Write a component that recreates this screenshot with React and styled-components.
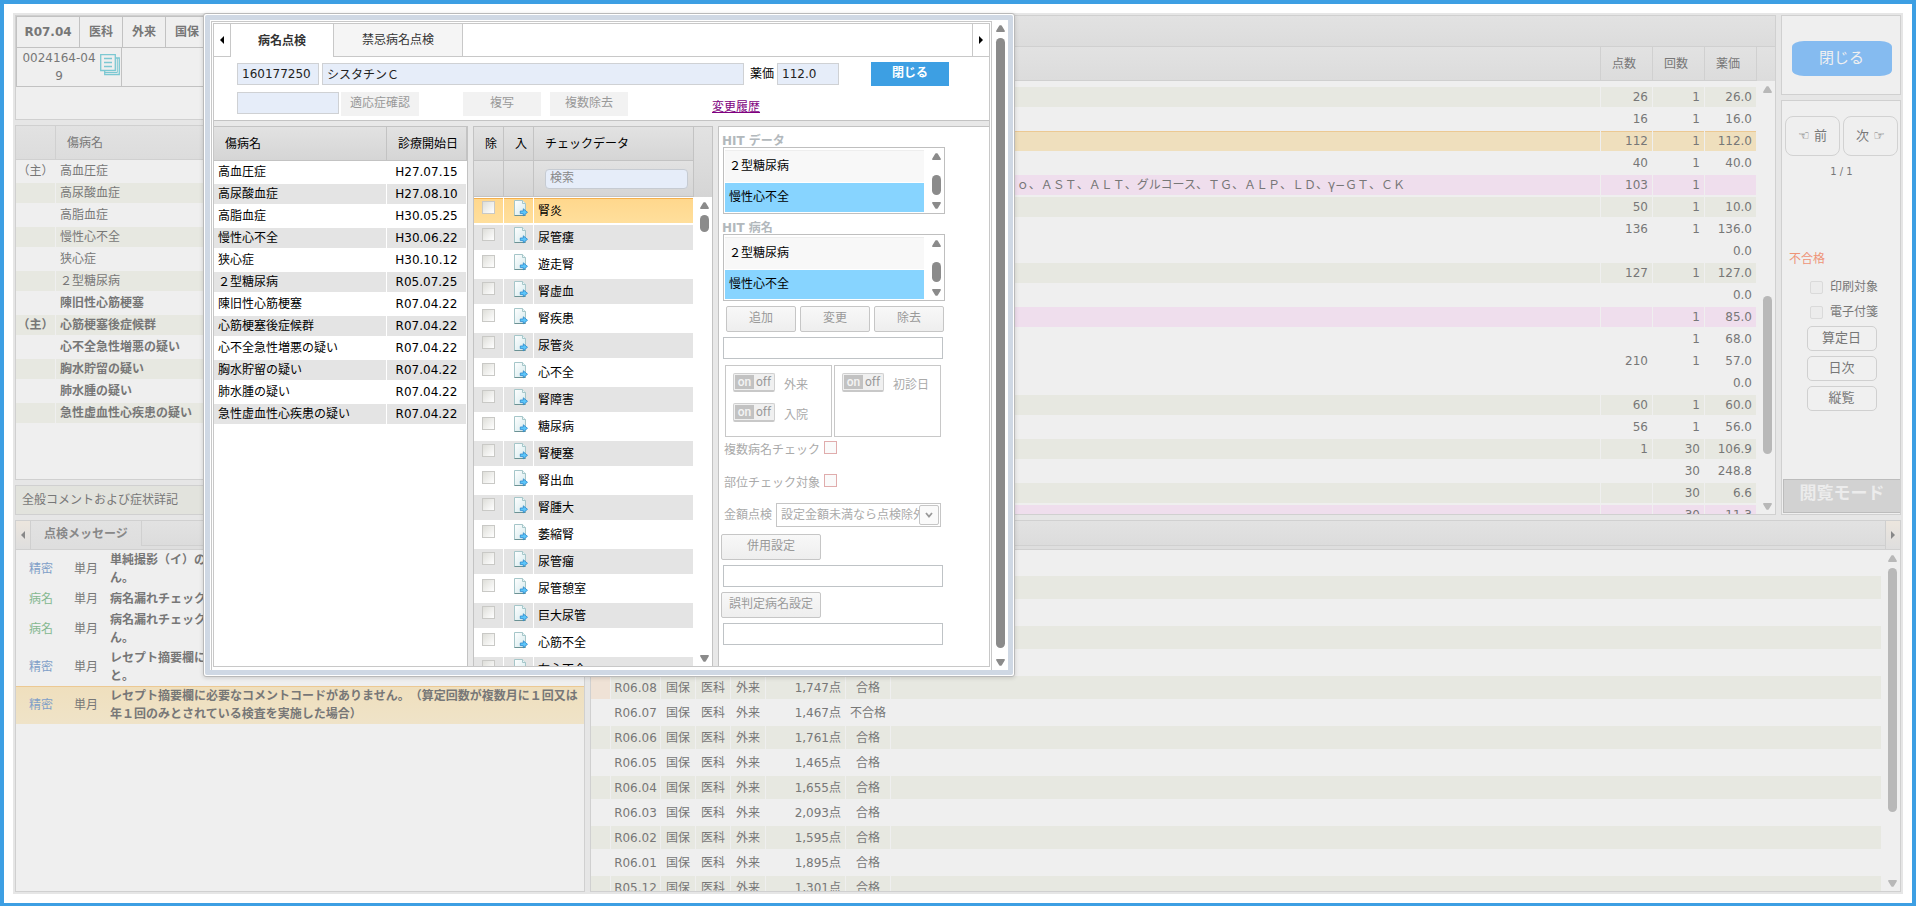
import React from 'react';
import styled, { createGlobalStyle, css } from 'styled-components';

const diseases = [
	{ name: '高血圧症', date: 'H27.07.15', main: true },
	{ name: '高尿酸血症', date: 'H27.08.10' },
	{ name: '高脂血症', date: 'H30.05.25' },
	{ name: '慢性心不全', date: 'H30.06.22' },
	{ name: '狭心症', date: 'H30.10.12' },
	{ name: '２型糖尿病', date: 'R05.07.25' },
	{ name: '陳旧性心筋梗塞', date: 'R07.04.22', bold: true },
	{ name: '心筋梗塞後症候群', date: 'R07.04.22', bold: true, main: true },
	{ name: '心不全急性増悪の疑い', date: 'R07.04.22', bold: true },
	{ name: '胸水貯留の疑い', date: 'R07.04.22', bold: true },
	{ name: '肺水腫の疑い', date: 'R07.04.22', bold: true },
	{ name: '急性虚血性心疾患の疑い', date: 'R07.04.22', bold: true },
];

const checkData = [
	'腎炎', '尿管瘻', '遊走腎', '腎虚血', '腎疾患', '尿管炎', '心不全', '腎障害', '糖尿病',
	'腎梗塞', '腎出血', '腎腫大', '萎縮腎', '尿管瘤', '尿管憩室', '巨大尿管', '心筋不全', '右心不全',
];

// name, points, count, price, tone
const acts = [
	['', '26', '1', '26.0', 'stripe'],
	['', '16', '1', '16.0', 'plain'],
	['', '112', '1', '112.0', 'selected'],
	['', '40', '1', '40.0', 'plain'],
	['ｏ、ＡＳＴ、ＡＬＴ、グルコース、ＴＧ、ＡＬＰ、ＬＤ、γ−ＧＴ、ＣＫ', '103', '1', '', 'pink'],
	['', '50', '1', '10.0', 'stripe'],
	['', '136', '1', '136.0', 'plain'],
	['', '', '', '0.0', 'plain'],
	['', '127', '1', '127.0', 'stripe'],
	['', '', '', '0.0', 'plain'],
	['', '', '1', '85.0', 'pink'],
	['', '', '1', '68.0', 'plain'],
	['', '210', '1', '57.0', 'plain'],
	['', '', '', '0.0', 'plain'],
	['', '60', '1', '60.0', 'stripe'],
	['', '56', '1', '56.0', 'plain'],
	['', '1', '30', '106.9', 'stripe'],
	['', '', '30', '248.8', 'plain'],
	['', '', '30', '6.6', 'stripe'],
	['', '', '30', '11.3', 'pink'],
];

const history = [
	null, null, null, null, null,
	['R06.08', '1,747点', '合格'],
	['R06.07', '1,467点', '不合格'],
	['R06.06', '1,761点', '合格'],
	['R06.05', '1,465点', '合格'],
	['R06.04', '1,655点', '合格'],
	['R06.03', '2,093点', '合格'],
	['R06.02', '1,595点', '合格'],
	['R06.01', '1,895点', '合格'],
	['R05.12', '1,301点', '合格'],
];

const messages = [
	{ kind: '精密', lines: ['単純撮影（イ）の', 'ん。'] },
	{ kind: '病名', lines: ['病名漏れチェック'] },
	{ kind: '病名', lines: ['病名漏れチェック', 'ん。'] },
	{ kind: '精密', lines: ['レセプト摘要欄に', 'と。'] },
	{
		kind: '精密',
		selected: true,
		lines: [
			'レセプト摘要欄に必要なコメントコードがありません。（算定回数が複数月に１回又は',
			'年１回のみとされている検査を実施した場合）',
		],
	},
];

function Scrollbar({ before, thumb, after, dim }) {
	const color = dim ? '#b8b8b8' : '#8b8b8b';
	return (
		<ScrollTrack aria-hidden="true">
			<svg width="9" height="7" viewBox="0 0 9 7">
				<path d="M3.8 1 H5.2 L8.2 6.2 H.8 Z" fill={color} stroke={color} strokeWidth="1.4" strokeLinejoin="round" />
			</svg>
			<ScrollLane>
				<Space $grow={before} />
				<Thumb $grow={thumb} $color={color} />
				<Space $grow={after} />
			</ScrollLane>
			<svg width="9" height="7" viewBox="0 0 9 7">
				<path d="M3.8 6 H5.2 L8.2 .8 H.8 Z" fill={color} stroke={color} strokeWidth="1.4" strokeLinejoin="round" />
			</svg>
		</ScrollTrack>
	);
}

function Arrow({ right, color = '#000' }) {
	return (
		<svg width="4" height="8" viewBox="0 0 4 8" aria-hidden="true">
			<path d={right ? 'M0 0 L4 4 L0 8 Z' : 'M4 0 L0 4 L4 8 Z'} fill={color} />
		</svg>
	);
}

function CopyIcon() {
	return (
		<svg width="20" height="22" viewBox="0 0 20 22" fill="none" stroke="#7cc8d2" strokeWidth="1.3" aria-hidden="true">
			<path d="M.7 .7 H15.3 V16.5 H.7 Z" />
			<path d="M15.3 4 H19.3 V20.5 H4.7 V16.5" />
			<path d="M17.3 4 V18.5 H4.7" strokeWidth="1" />
			<path d="M4 4.5 H12 M4 8.5 H12 M4 12.5 H12" />
		</svg>
	);
}

function InsertIcon() {
	return (
		<svg width="14" height="17" viewBox="0 0 14 17" aria-hidden="true">
			<defs>
				<linearGradient id="sheet" x1="0" y1="0" x2="1" y2="1">
					<stop offset="0" stopColor="#fff" />
					<stop offset="1" stopColor="#d4e9ec" />
				</linearGradient>
			</defs>
			<path d="M.5 .5 H8.5 L11.5 3.5 V15.5 H.5 Z" fill="url(#sheet)" stroke="#a5c6c9" />
			<path d="M.5 15.5 H11.5" stroke="#6c9294" />
			<path d="M8.5 .5 V3.5 H11.5" fill="#e9f6f7" stroke="#a5c6c9" />
			<path d="M6.3 11 H9.3 V8.8 L13.5 12.3 L9.3 15.8 V13.6 H6.3 Z" fill="#5cc6fa" stroke="#2a86cc" strokeWidth=".8" />
		</svg>
	);
}

function ReceiptSummary() {
	return (
		<Panel>
			<TagRow>
				<Tag $width={63}>R07.04</Tag>
				<Tag $width={43}>医科</Tag>
				<Tag $width={43}>外来</Tag>
				<Tag $width={43}>国保</Tag>
			</TagRow>
			<PatientRow>
				<PatientCell>
					<span>0024164-04 9</span>
					<CopyIcon />
				</PatientCell>
			</PatientRow>
		</Panel>
	);
}

function DiseaseList() {
	return (
		<Panel>
			<DimTable $rowHeight={22}>
				<colgroup>
					<col width="40" />
					<col />
				</colgroup>
				<thead>
					<tr>
						<Th $dim />
						<Th $dim $pad={11}>傷病名</Th>
					</tr>
				</thead>
				<tbody>
					{diseases.map((d, i) => (
						<Row key={d.name} $tone={i % 2 ? 'stripe' : 'plain'} $bold={d.bold}>
							<Td $align="center" $pad={0}>{d.main ? '（主）' : ''}</Td>
							<Td>{d.name}</Td>
						</Row>
					))}
				</tbody>
			</DimTable>
		</Panel>
	);
}

function ActList() {
	return (
		<Panel>
			<TitleBar />
			<TableArea>
				<Clip>
					<DimTable $rowHeight={22}>
						<colgroup>
							<col width="426" />
							<col />
							<col width="52" />
							<col width="52" />
							<col width="52" />
						</colgroup>
						<thead>
							<tr>
								<Th $dim colSpan={2} />
								<Th $dim $pad={11}>点数</Th>
								<Th $dim $pad={11}>回数</Th>
								<Th $dim $pad={11}>薬価</Th>
							</tr>
							<SpacerRow><td colSpan={5} /></SpacerRow>
						</thead>
						<tbody>
							{acts.map(([name, points, count, price, tone], i) => (
								<Row key={i} $tone={tone}>
									<Td $open />
									<Td>{name}</Td>
									<Td $align="right">{points}</Td>
									<Td $align="right">{count}</Td>
									<Td $align="right">{price}</Td>
								</Row>
							))}
						</tbody>
					</DimTable>
				</Clip>
				<ScrollSide $width={18}>
					<HeadStub $height={34} $dim />
					<Scrollbar before={202} thumb={163} after={44} dim />
				</ScrollSide>
			</TableArea>
		</Panel>
	);
}

function SideMenu() {
	return (
		<SideColumn>
			<CloseBox>
				<CloseButton type="button">閉じる</CloseButton>
			</CloseBox>
			<SidePanel>
				<PagerRow>
					<PagerButton type="button">☜ 前</PagerButton>
					<PagerButton type="button">次 ☞</PagerButton>
				</PagerRow>
				<PageCount>1 / 1</PageCount>
				<Verdict>不合格</Verdict>
				<SideCheck>
					<input type="checkbox" disabled />印刷対象
				</SideCheck>
				<SideCheck>
					<input type="checkbox" disabled />電子付箋
				</SideCheck>
				<SideButtons>
					<SideButton type="button">算定日</SideButton>
					<SideButton type="button">日次</SideButton>
					<SideButton type="button">縦覧</SideButton>
				</SideButtons>
				<ModeBadge>閲覧モード</ModeBadge>
			</SidePanel>
		</SideColumn>
	);
}

function MessageList() {
	return (
		<Panel>
			<DimTabs>
				<DimArrow type="button" aria-label="前のタブ"><Arrow color="#888" /></DimArrow>
				<DimTab type="button">点検メッセージ</DimTab>
				<TabRest />
			</DimTabs>
			{messages.map((m, i) => (
				<Message key={i} $selected={m.selected}>
					<Kind $kind={m.kind}>{m.kind}</Kind>
					<span>単月</span>
					<p>
						{m.lines.map((line) => (
							<React.Fragment key={line}>{line}<br /></React.Fragment>
						))}
					</p>
				</Message>
			))}
		</Panel>
	);
}

function HistoryList() {
	return (
		<Panel>
			<DimTabs>
				<TabRest />
				<DimArrow type="button" aria-label="次のタブ" $right><Arrow right color="#888" /></DimArrow>
			</DimTabs>
			<TableArea>
				<Clip>
					<DimTable $rowHeight={25}>
						<colgroup>
							<col width="20" />
							<col width="50" />
							<col width="35" />
							<col width="35" />
							<col width="35" />
							<col width="80" />
							<col width="45" />
							<col />
						</colgroup>
						<tbody>
							{history.map((h, i) => (
								<Row key={i} $tone={i % 2 ? 'stripe' : 'plain'}>
									<Td $peach={i === 5} />
									<Td $align="center" $pad={0}>{h && h[0]}</Td>
									<Td $align="center" $pad={0}>{h && '国保'}</Td>
									<Td $align="center" $pad={0}>{h && '医科'}</Td>
									<Td $align="center" $pad={0}>{h && '外来'}</Td>
									<Td $align="right">{h && h[1]}</Td>
									<Td $align="center" $pad={0}>{h && h[2]}</Td>
									<Td $open />
								</Row>
							))}
						</tbody>
					</DimTable>
				</Clip>
				<ScrollSide $width={19}>
					<Scrollbar before={0} thumb={245} after={62} dim />
				</ScrollSide>
			</TableArea>
		</Panel>
	);
}

function HitList({ title }) {
	return (
		<>
			<HitTitle>{title}</HitTitle>
			<HitBox>
				<ul>
					<HitItem>２型糖尿病</HitItem>
					<HitItem $selected>慢性心不全</HitItem>
				</ul>
				<ScrollSide $width={16}>
					<Scrollbar before={9} thumb={20} after={1} />
				</ScrollSide>
			</HitBox>
		</>
	);
}

function Switch({ label }) {
	return (
		<SwitchRow>
			<SwitchButton type="button" disabled aria-label={label}>
				<b>on</b>
				<span>off</span>
			</SwitchButton>
			{label}
		</SwitchRow>
	);
}

function HitForm() {
	return (
		<FormPanel>
			<HitList title="HIT データ" />
			<HitList title="HIT 病名" />
			<ButtonRow>
				<GrayButton type="button" disabled>追加</GrayButton>
				<GrayButton type="button" disabled>変更</GrayButton>
				<GrayButton type="button" disabled>除去</GrayButton>
			</ButtonRow>
			<LineInput aria-label="病名" />
			<SwitchGroups>
				<SwitchGroup>
					<Switch label="外来" />
					<Switch label="入院" />
				</SwitchGroup>
				<SwitchGroup>
					<Switch label="初診日" />
				</SwitchGroup>
			</SwitchGroups>
			<RedCheck>複数病名チェック<input type="checkbox" disabled /></RedCheck>
			<RedCheck>部位チェック対象<input type="checkbox" disabled /></RedCheck>
			<SelectRow>
				<label htmlFor="amount">金額点検</label>
				<SelectBox>
					<select id="amount" disabled>
						<option>設定金額未満なら点検除外</option>
					</select>
					<Chevron>
						<svg width="8" height="6" viewBox="0 0 8 6" aria-hidden="true">
							<path d="M1 1 L4 4.5 L7 1" fill="none" stroke="#999" strokeWidth="1.8" />
						</svg>
					</Chevron>
				</SelectBox>
			</SelectRow>
			<WideButton type="button" disabled>併用設定</WideButton>
			<LineInput aria-label="併用設定" />
			<WideButton type="button" disabled>誤判定病名設定</WideButton>
			<LineInput aria-label="誤判定病名設定" />
		</FormPanel>
	);
}

function CheckDialog() {
	return (
		<Dialog role="dialog" aria-label="病名点検">
			<DialogFrame>
				<DialogOuter>
					<DialogInner>
						<Tabs>
							<TabArrow type="button" aria-label="前のタブ"><Arrow /></TabArrow>
							<Tab type="button" $active>病名点検</Tab>
							<Tab type="button">禁忌病名点検</Tab>
							<TabFill />
							<TabArrow type="button" aria-label="次のタブ" $right><Arrow right /></TabArrow>
						</Tabs>
						<Tools>
							<ToolRow>
								<Field $width={82} defaultValue="160177250" aria-label="コード" />
								<Field $grow defaultValue="シスタチンＣ" aria-label="名称" />
								<PriceLabel>薬価<Field $width={62} defaultValue="112.0" /></PriceLabel>
								<BlueButton type="button">閉じる</BlueButton>
							</ToolRow>
							<SubRow>
								<Field $width={102} aria-label="適応症" />
								<FlatButton type="button" disabled>適応症確認</FlatButton>
								<FlatButton type="button" disabled $gap={42}>複写</FlatButton>
								<FlatButton type="button" disabled $gap={7}>複数除去</FlatButton>
								<HistoryLink href="#history">変更履歴</HistoryLink>
							</SubRow>
						</Tools>
						<Columns>
							<NamePanel>
								<DialogTable $rowHeight={22}>
									<colgroup>
										<col />
										<col width="80" />
									</colgroup>
									<thead>
										<tr>
											<Th $pad={11}>傷病名</Th>
											<Th $pad={11}>診療開始日</Th>
										</tr>
									</thead>
									<tbody>
										{diseases.map((d, i) => (
											<Row key={d.name} $tone={i % 2 ? 'gray' : 'white'}>
												<Td>{d.name}</Td>
												<Td $align="center" $pad={0}>{d.date}</Td>
											</Row>
										))}
									</tbody>
								</DialogTable>
							</NamePanel>
							<CheckPanel>
								<Clip>
									<DialogTable $rowHeight={27}>
										<colgroup>
											<col width="30" />
											<col width="30" />
											<col />
										</colgroup>
										<thead>
											<tr>
												<Th $pad={11}>除</Th>
												<Th $pad={11}>入</Th>
												<Th $pad={11}>チェックデータ</Th>
											</tr>
											<tr>
												<Th $tall />
												<Th $tall />
												<Th $tall $pad={11}><Search placeholder="検索" aria-label="検索" /></Th>
											</tr>
										</thead>
										<tbody>
											{checkData.map((name, i) => (
												<Row key={name} $tone={i === 0 ? 'picked' : i % 2 ? 'gray' : 'white'}>
													<Td $top $pad={8}><input type="checkbox" disabled aria-label={name} /></Td>
													<Td $top $pad={10}><InsertIcon /></Td>
													<Td>{name}</Td>
												</Row>
											))}
										</tbody>
									</DialogTable>
								</Clip>
								<ScrollSide $width={18}>
									<HeadStub $height={70} />
									<Scrollbar before={0} thumb={17} after={418} />
								</ScrollSide>
							</CheckPanel>
							<HitForm />
						</Columns>
					</DialogInner>
				</DialogOuter>
				<ScrollSide $width={16}>
					<Scrollbar before={0} thumb={608} after={5} />
				</ScrollSide>
			</DialogFrame>
		</Dialog>
	);
}

function App() {
	return (
		<>
			<GlobalStyle />
			<Page>
				<Workspace>
					<TopArea>
						<LeftColumn>
							<ReceiptSummary />
							<DiseaseList />
							<CommentBar>全般コメントおよび症状詳記</CommentBar>
						</LeftColumn>
						<ActList />
						<SideMenu />
					</TopArea>
					<BottomArea>
						<MessageList />
						<HistoryList />
					</BottomArea>
				</Workspace>
				<CheckDialog />
			</Page>
		</>
	);
}

export default App;

const GlobalStyle = createGlobalStyle`
	* {
		box-sizing: border-box;
	}
	body {
		margin: 0;
		color: #000;
		font: 12px/18px "DejaVu Sans", "Noto Sans CJK JP", sans-serif;
		text-spacing-trim: space-all;
	}
	button, input, select {
		margin: 0;
		padding: 0;
		color: inherit;
		font: inherit;
	}
	ul, p {
		margin: 0;
		padding: 0;
		list-style: none;
	}
	svg {
		display: block;
		flex: none;
	}
`;

const dimHead = 'linear-gradient(#e2e2e2, #dcdcdc)';
const darkHead = 'linear-gradient(#e2e2e2, #d5d5d5)';

const Page = styled.div`
	position: relative;
	height: 100vh;
	padding: 9px;
	border: 4px solid #3d9fe3;
	border-bottom-width: 3px;
	background: #fff;
`;
const Workspace = styled.div`
	display: grid;
	grid-template-rows: minmax(0, 500fr) minmax(0, 372fr);
	gap: 5px;
	height: 100%;
	padding: 2px;
	background: #e6e6e6;
	color: #777;
`;
const TopArea = styled.div`
	display: grid;
	grid-template-columns: 30% minmax(0, 1fr) 120px;
	gap: 5px;
	min-height: 0;
`;
const BottomArea = styled.div`
	display: grid;
	grid-template-columns: minmax(0, 10fr) minmax(0, 23fr);
	gap: 5px;
	min-height: 0;
`;
const LeftColumn = styled.div`
	display: grid;
	grid-template-rows: 105px minmax(0, 1fr) 30px;
	gap: 5px;
	min-height: 0;
`;
const Panel = styled.section`
	display: flex;
	flex-direction: column;
	min-width: 0;
	min-height: 0;
	overflow: hidden;
	border: 1px solid #d0d0d0;
	background: #efefef;
`;
const TagRow = styled.div`
	display: flex;
	height: 32px;
	border: solid #c2c2c2;
	border-width: 1px 0 1px 1px;
`;
const Tag = styled.div`
	width: ${(props) => props.$width}px;
	border-right: 1px solid #c2c2c2;
	font-weight: bold;
	line-height: 30px;
	text-align: center;
`;
const PatientRow = styled.div`
	display: flex;
	border: solid #c2c2c2;
	border-width: 0 0 1px 1px;
`;
const PatientCell = styled.div`
	display: flex;
	gap: 4px;
	width: 105px;
	padding: 1px 0 1px 5px;
	border-right: 1px solid #c2c2c2;
	span {
		width: 74px;
		text-align: center;
	}
	svg {
		margin-top: 5px;
	}
`;
const CommentBar = styled.div`
	padding: 0 6px;
	border: 1px solid #d0d0d0;
	background: #e2e3dd;
	line-height: 28px;
`;

/* tables */
const tones = {
	plain: '#efefef',
	stripe: '#e7e8e1',
	pink: '#efdeed',
	selected: '#efdfbd',
	white: '#fff',
	gray: '#e4e4e4',
	picked: 'linear-gradient(#ffd78c, #ffdf9c)',
};
const Row = styled.tr`
	font-weight: ${(props) => (props.$bold ? 'bold' : 'normal')};
	td {
		background: ${(props) => tones[props.$tone]};
		background-clip: padding-box;
	}
	${(props) => props.$tone === 'selected' && css`
		td {
			box-shadow: inset 0 1px #ecc993;
		}
	`}
	${(props) => props.$tone === 'picked' && css`
		td {
			box-shadow: inset 0 1px #f5b04c;
		}
	`}
`;
const Td = styled.td`
	padding: 0 ${(props) => props.$pad ?? 4}px;
	overflow: hidden;
	border: solid transparent;
	border-width: 1px ${(props) => (props.$open ? 0 : 1)}px 1px 0;
	text-align: ${(props) => props.$align || 'left'};
	vertical-align: ${(props) => (props.$top ? 'top' : 'middle')};
	white-space: nowrap;
	${(props) => props.$peach && css`
		&& {
			background-color: #efe2d6;
		}
	`}
	svg {
		margin-top: 2px;
	}
	input {
		display: block;
		appearance: none;
		width: 13px;
		height: 13px;
		margin-top: 3px;
		border: 1px solid #c9c9c6;
		background: linear-gradient(135deg, #deded9, #fff);
	}
`;
const Table = styled.table`
	width: 100%;
	table-layout: fixed;
	border-collapse: separate;
	border-spacing: 0;
	tbody td {
		height: ${(props) => props.$rowHeight}px;
		line-height: 18px;
	}
`;
const DimTable = styled(Table)`
	color: #777;
`;
const DialogTable = styled(Table)`
	color: #000;
`;
const Th = styled.th`
	height: ${(props) => (props.$tall ? 36 : 34)}px;
	padding: 0 0 0 ${(props) => props.$pad ?? 0}px;
	border: solid ${(props) => (props.$dim ? '#d0d0d0' : '#c3c3c3')};
	border-width: 0 1px 1px 0;
	background: ${(props) => (props.$dim ? dimHead : darkHead)};
	font-weight: normal;
	text-align: left;
	white-space: nowrap;
`;
const SpacerRow = styled.tr`
	height: 5px;
	td {
		padding: 0;
	}
`;
const TitleBar = styled.div`
	flex: none;
	height: 31px;
	border-bottom: 1px solid #d0d0d0;
	background: ${dimHead};
`;
const TableArea = styled.div`
	display: flex;
	flex: 1;
	min-height: 0;
`;
const Clip = styled.div`
	flex: 1;
	min-width: 0;
	overflow: hidden;
`;

/* scrollbars */
const ScrollSide = styled.div`
	display: flex;
	flex: none;
	flex-direction: column;
	width: ${(props) => props.$width}px;
`;
const HeadStub = styled.div`
	flex: none;
	height: ${(props) => props.$height}px;
	background: ${(props) => (props.$dim ? dimHead : darkHead)};
`;
const ScrollTrack = styled.div`
	display: flex;
	flex: 1;
	flex-direction: column;
	align-items: center;
	align-self: flex-end;
	width: 15px;
	min-height: 0;
	padding: 5px 0 4px;
`;
const ScrollLane = styled.div`
	display: flex;
	flex: 1;
	flex-direction: column;
	width: 9px;
	min-height: 0;
	padding: 6px 0;
`;
const Space = styled.div`
	flex: ${(props) => props.$grow} 1 0;
`;
const Thumb = styled.div`
	flex: ${(props) => props.$grow} 1 0;
	border-radius: 5px;
	background: ${(props) => props.$color};
`;

/* right side menu */
const SideColumn = styled.div`
	display: grid;
	grid-template-rows: 80px minmax(0, 1fr);
	gap: 5px;
	min-height: 0;
`;
const CloseBox = styled(Panel)`
	align-items: center;
	justify-content: center;
	padding: 10px 0 4px 1px;
`;
const CloseButton = styled.button`
	width: 100px;
	height: 35px;
	border: 0;
	border-radius: 12px / 6px;
	background: #85bbf0;
	color: #f0f0f0;
	font-size: 15px;
`;
const SidePanel = styled(Panel)`
	padding: 15px 0 1px 1px;
`;
const PagerRow = styled.div`
	display: flex;
	justify-content: space-between;
	padding: 0 2px;
`;
const PagerButton = styled.button`
	width: 55px;
	height: 40px;
	border: 1px solid #d2d2d2;
	border-radius: 8px;
	background: #efefef;
	font-size: 13px;
`;
const PageCount = styled.div`
	padding-top: 7px;
	font-size: 10px;
	text-align: center;
`;
const Verdict = styled.div`
	margin: 69px 0 19px 6px;
	color: #ee9478;
`;
const SideCheck = styled.label`
	display: flex;
	align-items: center;
	gap: 7px;
	height: 18px;
	margin: -9px 0 16px 27px;
	input {
		appearance: none;
		width: 13px;
		height: 13px;
		border: 1px solid #dadada;
		border-radius: 2px;
		background: #ececec;
	}
`;
const SideButtons = styled.div`
	display: flex;
	flex-direction: column;
	gap: 5px;
	align-items: center;
	margin-top: -11px;
`;
const SideButton = styled.button`
	width: 70px;
	height: 25px;
	padding-bottom: 2px;
	border: 1px solid #d0d0d0;
	border-radius: 5px;
	background: #f0f0f0;
	font-size: 13px;
`;
const ModeBadge = styled.div`
	height: 34px;
	margin-top: auto;
	border: 1px solid #bcbcbc;
	border-right: 0;
	background: #d2d2d2;
	color: #ececec;
	font-size: 17px;
	font-weight: bold;
	line-height: 26px;
	text-align: center;
`;

/* lower panels */
const DimTabs = styled.div`
	display: flex;
	flex: none;
	height: 29px;
	border-bottom: 1px solid #d0d0d0;
	background: #dedede;
`;
const DimArrow = styled.button`
	display: flex;
	align-items: center;
	justify-content: center;
	width: 15px;
	border: solid #cfcfcf;
	border-width: ${(props) => (props.$right ? '0 0 0 1px' : '0 1px 0 0')};
	background: linear-gradient(#ece6de, #dedede);
`;
const DimTab = styled.button`
	width: 111px;
	height: 25px;
	border: 0;
	border-right: 1px solid #d0d0d0;
	background: linear-gradient(#e2e2e2, #dedede);
	color: #888;
	font-weight: bold;
`;
const TabRest = styled.div`
	flex: 1;
	height: 25px;
	border-bottom: 1px solid #d0d0d0;
	background: ${dimHead};
`;
const Message = styled.div`
	display: grid;
	grid-template-columns: 45px 36px minmax(0, 1fr);
	align-items: center;
	padding: 1px 0 1px 13px;
	${(props) => props.$selected ? css`
		background: linear-gradient(#efdfbd, #efe3c8);
		box-shadow: inset 0 1px #ecc993;
	` : css`
		min-height: 22px;
	`}
	p {
		font-weight: bold;
		white-space: nowrap;
	}
`;
const Kind = styled.span`
	color: ${(props) => (props.$kind === '精密' ? '#7f9fc8' : '#84b890')};
`;

/* dialog */
const Dialog = styled.div`
	position: absolute;
	top: 9px;
	left: 199px;
	width: 812px;
	height: 664px;
	padding: 1px;
	border: 1px solid #b9b9b9;
	border-radius: 3px;
	background: #fff;
	box-shadow: 0 1px 4px rgba(0, 0, 0, 0.15);
`;
const DialogFrame = styled.div`
	display: flex;
	height: 100%;
	border: 5px solid #cfd8e4;
	border-radius: 2px;
`;
const DialogOuter = styled.div`
	flex: 1;
	min-width: 0;
	margin: 1px 0 0 1px;
	padding: 1px 1px 3px;
	border: solid #c8c8c8;
	border-width: 1px 1px 0;
`;
const DialogInner = styled.div`
	display: flex;
	flex-direction: column;
	height: 100%;
	border: 1px solid #c8c8c8;
`;
const Tabs = styled.div`
	display: flex;
	height: 33px;
`;
const TabArrow = styled.button`
	display: flex;
	align-items: center;
	justify-content: center;
	width: 17px;
	border: solid #c8c8c8;
	border-width: ${(props) => (props.$right ? '0 0 1px 1px' : '0 1px 1px 0')};
	background: #fff;
`;
const Tab = styled.button`
	width: ${(props) => (props.$active ? 102 : 130)}px;
	border: solid #c8c8c8;
	border-width: ${(props) => (props.$active ? '0' : '0 1px 1px')};
	background: ${(props) => (props.$active ? '#fff' : '#f5f5f5')};
	color: #333;
	font-weight: ${(props) => (props.$active ? 'bold' : 'normal')};
`;
const TabFill = styled.div`
	flex: 1;
	border-bottom: 1px solid #c8c8c8;
`;
const Tools = styled.div`
	display: flex;
	flex-direction: column;
	gap: 6px;
	padding: 5px 40px 4px 23px;
	border-bottom: 1px solid #c3c3c3;
`;
const ToolRow = styled.div`
	display: flex;
	align-items: center;
	gap: 3px;
`;
const SubRow = styled.div`
	display: flex;
	align-items: flex-start;
	gap: 2px;
`;
const Field = styled.input`
	flex: ${(props) => (props.$grow ? '1' : 'none')};
	width: ${(props) => props.$width}px;
	min-width: 0;
	height: 22px;
	padding: 0 4px 1px;
	border: 1px solid #cfd1d4;
	background: #e6edf9;
	color: #222;
`;
const PriceLabel = styled.label`
	display: flex;
	align-items: center;
	gap: 3px;
	margin: 0 29px 0 3px;
`;
const BlueButton = styled.button`
	width: 78px;
	height: 24px;
	padding-bottom: 3px;
	border: 0;
	background: #3d9fe3;
	color: #fff;
	font-weight: bold;
`;
const FlatButton = styled.button`
	width: 78px;
	height: 24px;
	margin-left: ${(props) => props.$gap || 0}px;
	padding-bottom: 3px;
	border: 0;
	background: #f2f2f2;
	color: #999;
`;
const HistoryLink = styled.a`
	align-self: flex-end;
	margin-left: 82px;
	color: #800080;
	text-underline-offset: 1px;
`;
const Columns = styled.div`
	display: flex;
	flex: 1;
	gap: 5px;
	min-height: 0;
	padding-top: 5px;
	background: #e8e8e8;
`;
const NamePanel = styled.div`
	width: 254px;
	overflow: hidden;
	border: solid #c3c3c3;
	border-width: 1px 1px 0 0;
	background: #fff;
`;
const CheckPanel = styled.div`
	display: flex;
	width: 240px;
	border: solid #c3c3c3;
	border-width: 1px 1px 0;
	background: #fff;
`;
const Search = styled.input`
	display: block;
	width: 143px;
	height: 20px;
	padding: 0 4px 2px;
	border: 1px solid #c6cbd2;
	border-radius: 4px;
	background: #e6edf9;
	&::placeholder {
		color: #888;
	}
`;
const FormPanel = styled.div`
	flex: 1;
	min-width: 0;
	padding: 5px 0 0 4px;
	border: solid #c3c3c3;
	border-width: 1px 0 0 1px;
	background: #fff;
	color: #aaa;
`;
const HitTitle = styled.div`
	height: 15px;
	margin-left: -1px;
	color: #b2b8bc;
	font-weight: bold;
`;
const HitBox = styled.div`
	display: flex;
	width: 222px;
	height: 67px;
	margin-bottom: 5px;
	border: 1px solid #bfbfbf;
	color: #000;
	ul {
		flex: 1;
		margin-right: 4px;
		padding: 2px 0 0 1px;
	}
`;
const HitItem = styled.li`
	height: ${(props) => (props.$selected ? 30 : 32)}px;
	padding-left: 4px;
	border-top: 1px solid ${(props) => (props.$selected ? '#fff' : '#eee')};
	background: ${(props) => (props.$selected ? '#87d4ff' : '#f8f8f8')};
	line-height: ${(props) => (props.$selected ? 28 : 31)}px;
`;
const ButtonRow = styled.div`
	display: flex;
	gap: 4px;
	padding-left: 3px;
`;
const GrayButton = styled.button`
	width: 70px;
	height: 26px;
	padding-bottom: 3px;
	border: 1px solid #c6c6c6;
	border-radius: 2px;
	background: linear-gradient(#f8f8f8, #eee);
	color: #999;
`;
const WideButton = styled(GrayButton)`
	display: block;
	width: 100px;
	margin-left: -2px;
`;
const LineInput = styled.input`
	display: block;
	width: 220px;
	height: 22px;
	margin: 5px 0;
	padding: 0 4px;
	border: 1px solid #bfc3c6;
	background: #fff;
`;
const SwitchGroups = styled.div`
	display: flex;
	gap: 2px;
	margin: 6px 0 4px 2px;
`;
const SwitchGroup = styled.div`
	width: 107px;
	height: 72px;
	padding: 7px;
	border: 1px solid #c8c8c8;
`;
const SwitchRow = styled.div`
	display: flex;
	align-items: flex-end;
	gap: 9px;
	height: 20px;
	margin-bottom: 10px;
	line-height: 15px;
`;
const SwitchButton = styled.button`
	display: flex;
	align-self: flex-start;
	width: 42px;
	height: 19px;
	padding: 1px;
	border: 1px solid #d0d0d0;
	border-bottom: 2px solid #c8c8c8;
	border-radius: 2px;
	background: #f0f0f0;
	color: #999;
	font-family: Roboto, sans-serif;
	font-size: 12px;
	line-height: 15px;
	b {
		width: 19px;
		background: #c2c2c2;
		color: #f4f4f4;
		font-weight: 500;
	}
	span {
		flex: 1;
	}
`;
const RedCheck = styled.label`
	display: flex;
	gap: 4px;
	height: 33px;
	padding-left: 1px;
	line-height: 18px;
	input {
		appearance: none;
		width: 13px;
		height: 13px;
		border: 1px solid #e0acac;
		background: #fafafa;
	}
`;
const SelectRow = styled.div`
	display: flex;
	align-items: center;
	gap: 4px;
	margin: -4px 0 7px;
	padding-left: 1px;
`;
const SelectBox = styled.div`
	display: flex;
	width: 165px;
	height: 24px;
	padding: 1px;
	border: 1px solid #c6c6c6;
	select {
		flex: 1;
		appearance: none;
		min-width: 0;
		overflow: hidden;
		padding-left: 3px;
		border: 0;
		background: #fff;
		color: #aaa;
		opacity: 1;
		text-overflow: clip;
	}
`;
const Chevron = styled.span`
	display: flex;
	align-items: center;
	justify-content: center;
	width: 20px;
	border: 1px solid #c6c6c6;
	border-radius: 2px;
	background: #fafafa;
`;
